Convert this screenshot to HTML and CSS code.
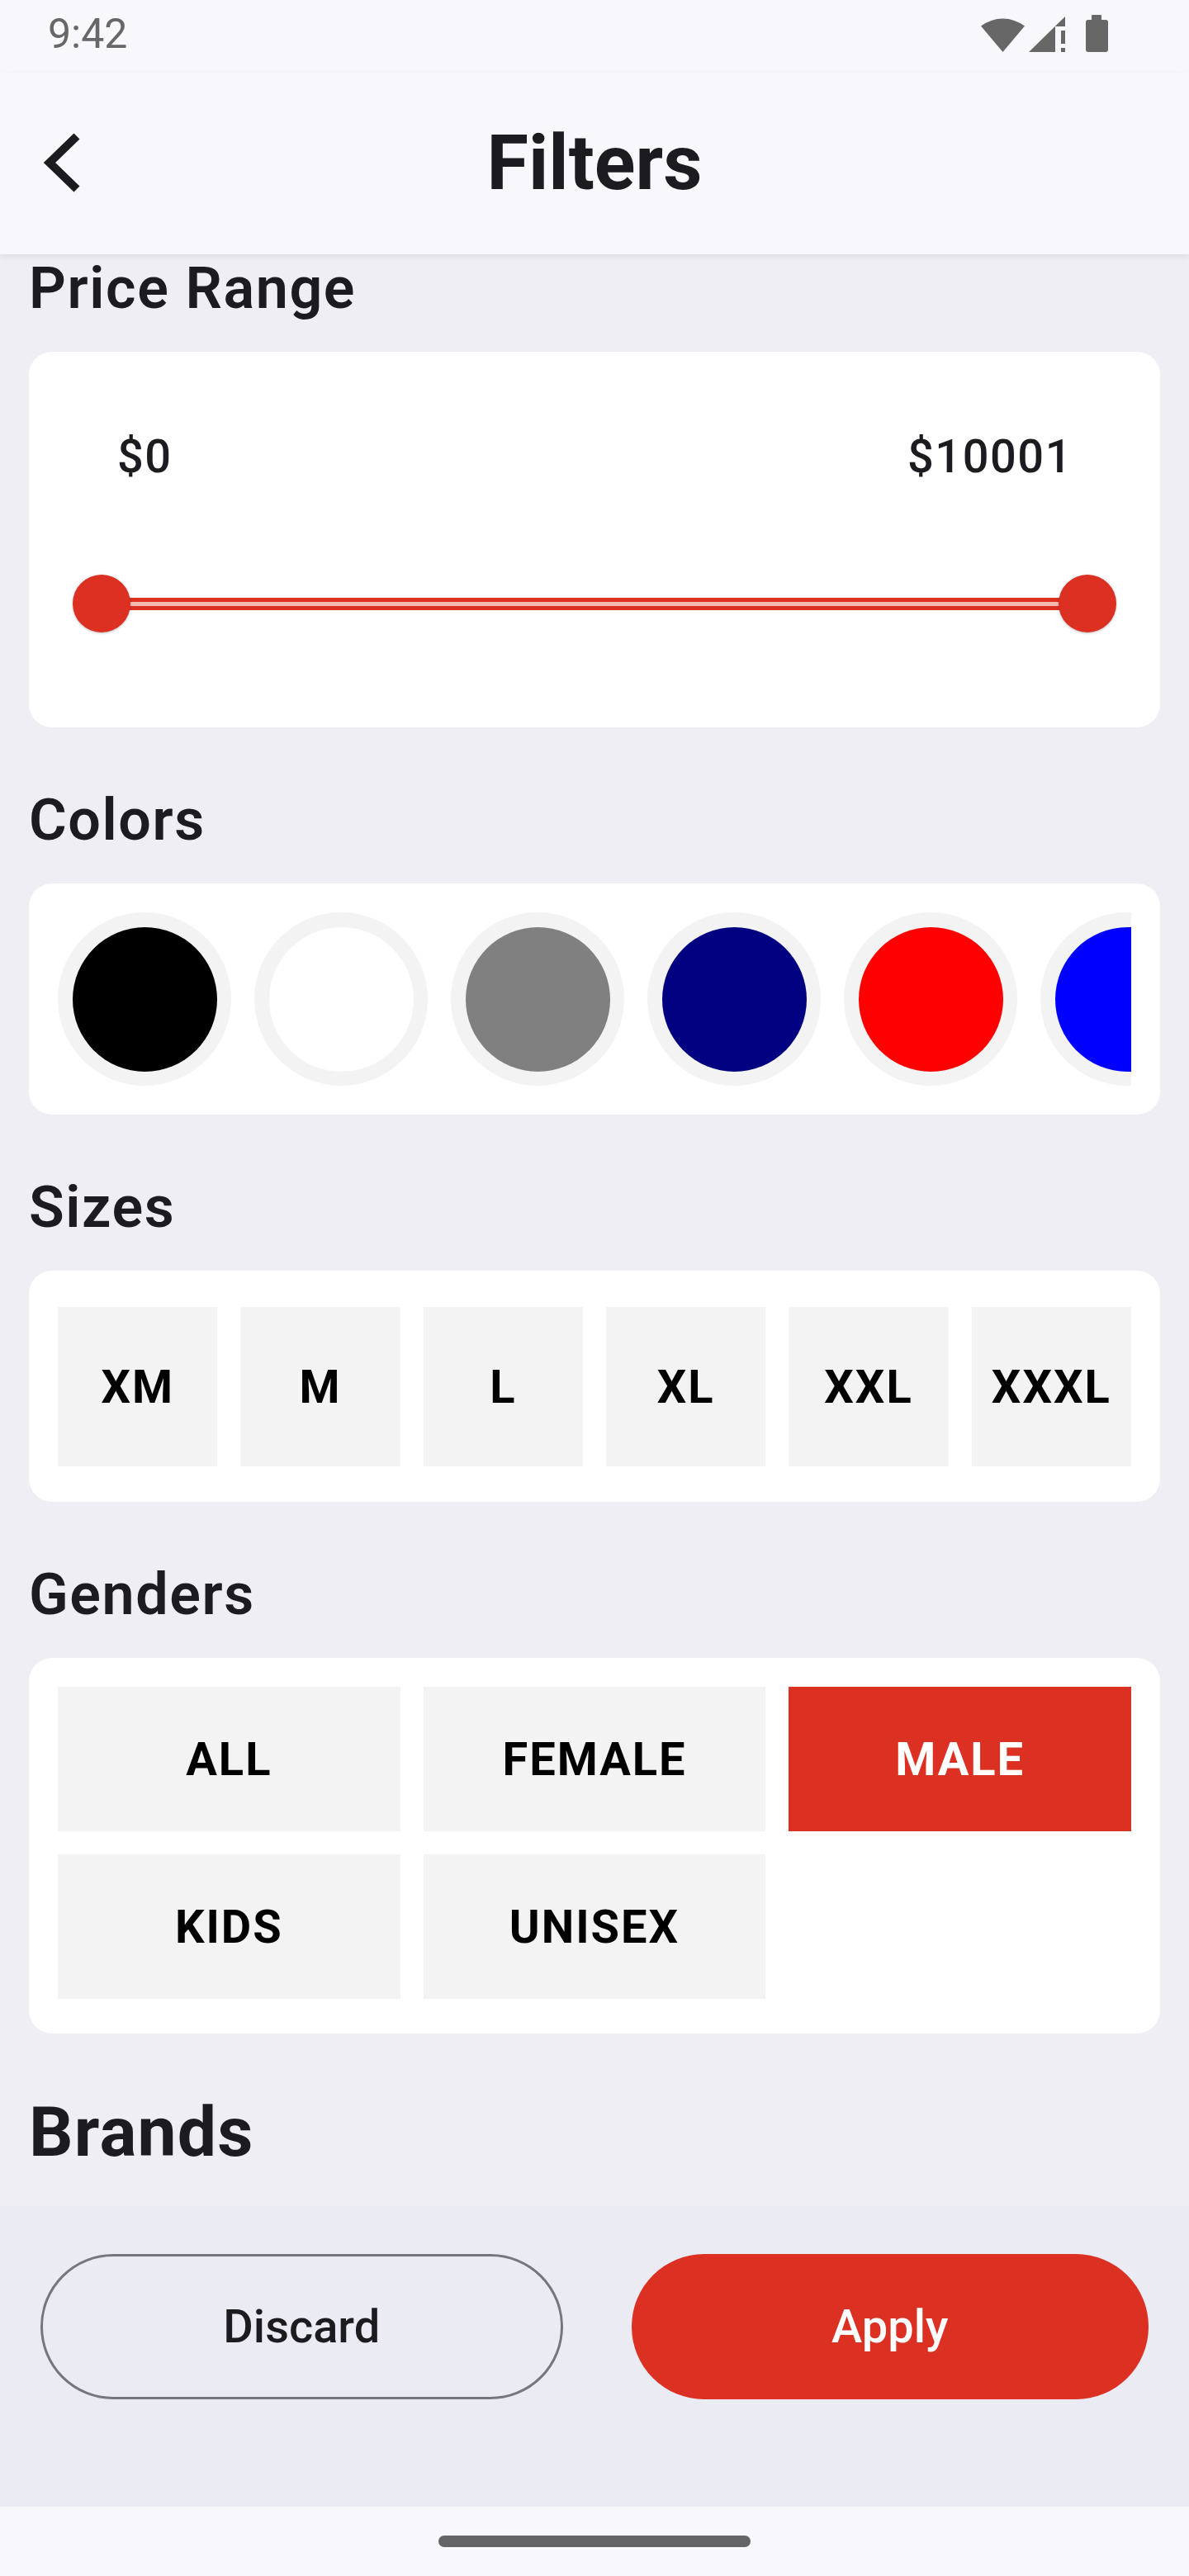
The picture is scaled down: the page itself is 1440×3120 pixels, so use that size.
FILE: index.html
```html
<!DOCTYPE html>
<html lang="en">
<head>
<meta charset="utf-8">
<title>Filters</title>
<link rel="stylesheet" href="styles.css">
</head>
<body>
<div class="screen">
  <div class="statusbar">
    <span class="time">9:42</span>
    <svg class="status-icons" width="170" height="60" viewBox="0 0 170 60">
      <path d="M34.5 53 L8 21.5 A44 44 0 0 1 61 21.5 Z" fill="#676767"/>
      <path d="M66 53 L98 53 L98 22 L110 22 L110 10 Z" fill="#676767"/>
      <rect x="105" y="27" width="5" height="16" fill="#676767"/>
      <rect x="105" y="48" width="5" height="5" fill="#676767"/>
      <rect x="142" y="8" width="12" height="8" rx="1" fill="#676767"/>
      <rect x="135" y="14" width="27" height="39" rx="3" fill="#676767"/>
    </svg>
  </div>

  <header class="appbar">
    <div class="appbar-left">
      <svg class="back" width="60" height="90" viewBox="0 0 60 90">
        <path d="M48 12 L15 44 L48 76" fill="none" stroke="#1c1b1f" stroke-width="10"/>
      </svg>
    </div>
    <h1 class="title">Filters</h1>
    <div class="appbar-right"></div>
  </header>

  <main class="content">
    <section class="section first">
      <h2 class="section-title">Price Range</h2>
      <div class="card price-card">
        <div class="price-labels">
          <span>$0</span>
          <span>$10001</span>
        </div>
        <div class="slider">
          <span class="thumb"></span>
          <span class="track"></span>
          <span class="thumb"></span>
        </div>
      </div>
    </section>

    <section class="section">
      <h2 class="section-title">Colors</h2>
      <div class="card colors-card">
        <div class="colors-row">
          <span class="swatch"><span class="dot dot-black"></span></span>
          <span class="swatch"><span class="dot dot-white"></span></span>
          <span class="swatch"><span class="dot dot-gray"></span></span>
          <span class="swatch"><span class="dot dot-navy"></span></span>
          <span class="swatch"><span class="dot dot-red"></span></span>
          <span class="swatch"><span class="dot dot-blue"></span></span>
        </div>
      </div>
    </section>

    <section class="section">
      <h2 class="section-title">Sizes</h2>
      <div class="card sizes-card">
        <div class="chip size">XM</div>
        <div class="chip size">M</div>
        <div class="chip size">L</div>
        <div class="chip size">XL</div>
        <div class="chip size">XXL</div>
        <div class="chip size">XXXL</div>
      </div>
    </section>

    <section class="section">
      <h2 class="section-title">Genders</h2>
      <div class="card genders-card">
        <div class="chip gender">ALL</div>
        <div class="chip gender">FEMALE</div>
        <div class="chip gender selected">MALE</div>
        <div class="chip gender">KIDS</div>
        <div class="chip gender">UNISEX</div>
      </div>
    </section>

    <section class="section">
      <h2 class="section-title big">Brands</h2>
    </section>
  </main>

  <footer class="actions">
    <button class="btn btn-outline">Discard</button>
    <button class="btn btn-filled">Apply</button>
  </footer>

  <div class="navbar"><span class="handle"></span></div>
</div>
</body>
</html>
```

FILE: styles.css
```css
* { box-sizing: border-box; }

html, body {
  margin: 0;
  padding: 0;
}

body {
  font-family: Roboto, "Noto Sans", "Liberation Sans", sans-serif;
  color: #1c1b1f;
  background: #efeef4;
}

.screen {
  width: 1440px;
  height: 3120px;
  display: flex;
  flex-direction: column;
  overflow: hidden;
  background: #efeef4;
}

/* status bar */
.statusbar {
  height: 88px;
  flex: none;
  background: #f7f7fc;
  display: flex;
  justify-content: space-between;
  align-items: flex-start;
  padding: 0 90px 0 58px;
}

.time {
  font-size: 50px;
  line-height: 59px;
  margin-top: 12px;
  color: #676767;
  font-weight: 400;
}

.status-icons {
  margin-top: 10px;
  display: block;
}

/* app bar */
.appbar {
  height: 220px;
  flex: none;
  background: #f7f7fc;
  display: grid;
  grid-template-columns: 1fr auto 1fr;
  align-items: center;
  position: relative;
  z-index: 2;
  box-shadow: 0 3px 8px rgba(0, 0, 0, 0.08);
}

.appbar-left {
  padding-left: 45px;
  display: flex;
  align-items: center;
}

.back { display: block; }

.title {
  margin: 0;
  font-size: 92px;
  line-height: 108px;
  font-weight: 700;
  color: #1c1b1f;
}

/* content */
.content {
  height: 2364px;
  flex: none;
  overflow: hidden;
  padding: 0 35px;
}

.section { margin-top: 71px; }
.section.first { margin-top: 0; }

.section-title {
  margin: 0 0 36px;
  font-size: 70px;
  line-height: 82px;
  font-weight: 600;
  letter-spacing: 1.6px;
  color: #1c1b1f;
}

.section-title.big {
  font-size: 84px;
  line-height: 98px;
  font-weight: 700;
  letter-spacing: 1.2px;
}

.card {
  background: #ffffff;
  border-radius: 28px;
}

/* price */
.price-card {
  padding: 94px 53px 115px;
}

.price-labels {
  display: flex;
  justify-content: space-between;
  padding: 0 53px 0 54px;
  font-size: 56px;
  line-height: 66px;
  font-weight: 500;
  letter-spacing: 1.5px;
  color: #1c1b1f;
}

.slider {
  margin-top: 110px;
  height: 70px;
  display: flex;
  align-items: center;
}

.thumb {
  width: 70px;
  height: 70px;
  flex: none;
  border-radius: 50%;
  background: #dc3023;
  box-shadow: 0 1px 3px rgba(0, 0, 0, 0.25);
  position: relative;
  z-index: 1;
}

.track {
  flex: 1;
  height: 15px;
  margin: 0 -4px;
  background: #f4b9b3;
  border-top: 5px solid #dc3023;
  border-bottom: 5px solid #dc3023;
}

/* colors */
.colors-card {
  padding: 35px;
}

.colors-row {
  display: flex;
  gap: 28px;
  overflow: hidden;
}

.swatch {
  width: 210px;
  height: 210px;
  flex: none;
  border-radius: 50%;
  background: #f3f3f3;
  display: flex;
  align-items: center;
  justify-content: center;
}

.dot {
  width: 175px;
  height: 175px;
  border-radius: 50%;
}

.dot-black { background: #000000; }
.dot-white { background: #ffffff; }
.dot-gray { background: #808080; }
.dot-navy { background: #000080; }
.dot-red { background: #ff0000; }
.dot-blue { background: #0000ff; }

/* chips */
.chip {
  background: #f3f3f3;
  display: flex;
  align-items: center;
  justify-content: center;
  font-size: 56px;
  font-weight: 700;
  letter-spacing: 2px;
  color: #000000;
}

.sizes-card {
  padding: 44px 35px 43px;
  display: grid;
  grid-template-columns: repeat(6, 1fr);
  gap: 28px;
}

.size { height: 193px; }

.genders-card {
  padding: 35px 35px 42px;
  display: grid;
  grid-template-columns: repeat(3, 1fr);
  gap: 28px;
}

.gender { height: 175px; }

.chip.selected {
  background: #dc3023;
  color: #ffffff;
}

/* actions */
.actions {
  height: 364px;
  flex: none;
  background: #ebebf3;
  display: flex;
  gap: 83px;
  padding: 58px 49px 0;
  align-items: flex-start;
}

.btn {
  flex: 1;
  height: 176px;
  border-radius: 88px;
  font-family: Roboto, "Noto Sans", "Liberation Sans", sans-serif;
  font-size: 56px;
  font-weight: 500;
  cursor: pointer;
}

.btn-outline {
  background: transparent;
  border: 3px solid #777680;
  color: #1c1b1f;
}

.btn-filled {
  background: #dc3023;
  border: none;
  color: #ffffff;
}

/* nav bar */
.navbar {
  height: 84px;
  flex: none;
  background: #f7f7fc;
  display: flex;
  justify-content: center;
  padding-top: 35px;
}

.handle {
  width: 378px;
  height: 14px;
  border-radius: 7px;
  background: #646466;
}
```
